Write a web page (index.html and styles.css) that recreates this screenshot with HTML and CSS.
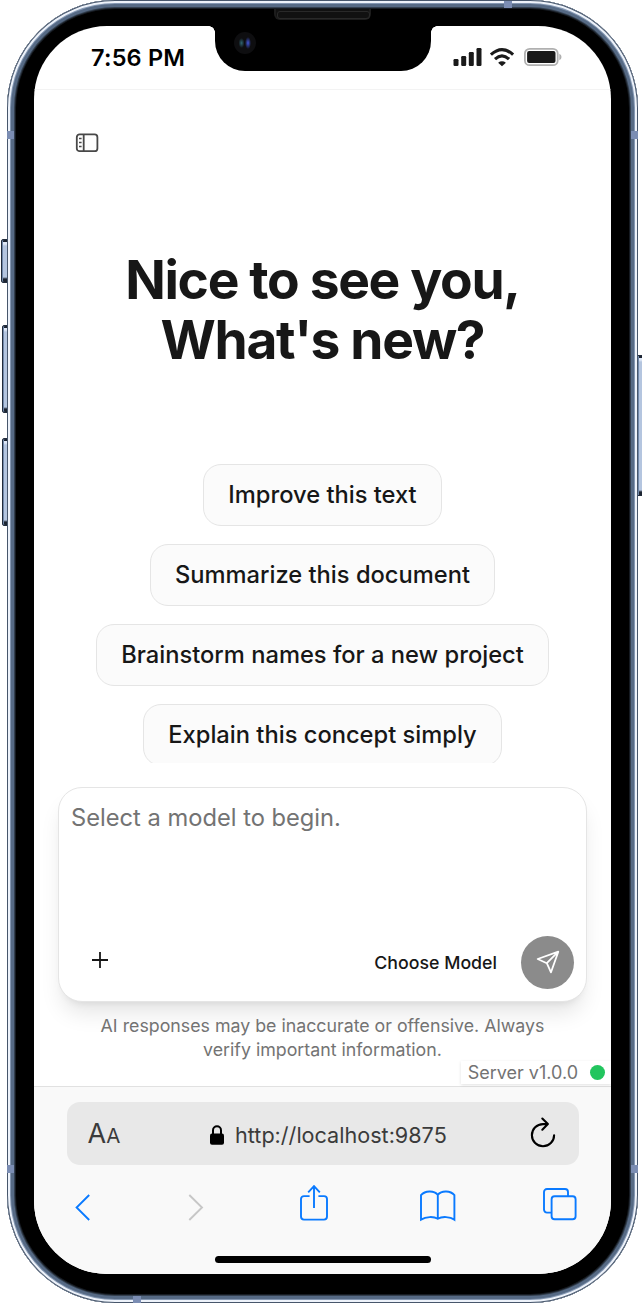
FILE: index.html
```html
<!DOCTYPE html>
<html lang="en">
<head>
<meta charset="utf-8">
<title>Chat</title>
<link rel="stylesheet" href="styles.css">
</head>
<body>
<div class="stage">
  <span class="key key-mute"></span>
  <span class="key key-up"></span>
  <span class="key key-down"></span>
  <span class="key key-power"></span>
  <div class="device">
    <div class="screen">
      <header class="status">
        <span class="time">7:56 PM</span>
        <svg class="signals" width="110" height="22" viewBox="0 0 110 22">
          <g fill="#1a1a1a">
            <rect x="1.500" y="12" width="5" height="7" rx="1.2"/>
            <rect x="9.200" y="9" width="5" height="10" rx="1.2"/>
            <rect x="16.800" y="5" width="5" height="14" rx="1.2"/>
            <rect x="24.500" y="1" width="5" height="18" rx="1.2"/>
            <path d="M50 19.2l-3.9-3.5q3.9-2.9 7.8 0z"/>
          </g>
          <g fill="none" stroke="#1a1a1a" stroke-width="3.1">
            <path d="M38.900 7.7Q50-2.6 61.100 7.7"/>
            <path d="M43 12.1Q50 5.7 57 12.1"/>
          </g>
          <rect x="72.9" y="1.8" width="32.8" height="16.4" rx="4.8" fill="none" stroke="#b0b0b0" stroke-width="1.8"/>
          <rect x="75.1" y="4" width="28.4" height="12" rx="2" fill="#1a1a1a"/>
          <path d="M107.300 6.8q2.2 .8 2.2 3.2t-2.2 3.2z" fill="#b0b0b0"/>
        </svg>
      </header>

      <main class="app">
        <nav class="topbar">
          <svg width="24" height="20" viewBox="0 0 24 20" fill="none" stroke="#484848" stroke-width="1.8">
            <rect x="1.8" y="1.4" width="20.6" height="16.8" rx="2.8"/>
            <path d="M8.7 1.4v16.8"/>
            <path d="M4 5.6h2.6M4 9.6h2.6M4 13.6h2.6" stroke-width="1.5"/>
          </svg>
        </nav>
        <h1 class="greeting">Nice to see you,<br>What's new?</h1>
        <div class="prompts">
          <button class="chip">Improve this text</button>
          <button class="chip">Summarize this document</button>
          <button class="chip">Brainstorm names for a new project</button>
          <button class="chip">Explain this concept simply</button>
        </div>
        <section class="composer">
          <p class="placeholder">Select a model to begin.</p>
          <div class="tools">
            <svg class="plus" width="18" height="18" viewBox="0 0 18 18" stroke="#171717" stroke-width="1.8"><path d="M1 9h16M9 1v16"/></svg>
            <span class="model">Choose Model</span>
            <button class="send" aria-label="Send">
              <svg width="24" height="24" viewBox="0 0 24 24" fill="none" stroke="#fff" stroke-width="1.8" stroke-linejoin="round"><path d="M22.3 1.7L15 22.3 10.8 13.2 1.7 9zM22.3 1.7L10.8 13.2"/></svg>
            </button>
          </div>
        </section>
        <p class="notice">AI responses may be inaccurate or offensive. Always<br>verify important information.</p>
        <div class="server"><span>Server v1.0.0</span><i class="dot"></i></div>
      </main>

      <footer class="browser">
        <div class="address">
          <span class="reader">A<small>A</small></span>
          <span class="url">
            <svg width="14" height="20" viewBox="0 0 14 20"><rect y="8.4" width="14" height="11.4" rx="2" fill="#000"/><path d="M3 9V5.2a4 4 0 0 1 8 0V9" fill="none" stroke="#000" stroke-width="2"/></svg>
            <span>http://localhost:9875</span>
          </span>
          <svg class="reload" width="26" height="31" viewBox="0 0 26 31" fill="none" stroke="#000" stroke-width="2.1" stroke-linecap="round" stroke-linejoin="round"><path d="M17.2 7.1H13A11.1 11.1 0 1 0 24.1 18.2M12.3 1.5l5.6 5.6-5.6 5.6"/></svg>
        </div>
        <div class="actions">
          <svg width="16" height="27" viewBox="0 0 16 27" class="blue"><path d="M14.2 1L1.6 13.5 14.2 26"/></svg>
          <svg width="16" height="27" viewBox="0 0 16 27" class="gray forward"><path d="M1.3 1L14 13.5 1.3 26"/></svg>
          <svg width="28" height="36" viewBox="0 0 28 36" class="blue share"><path d="M9.6 11.1H4a3 3 0 0 0-3 3V31.6a3 3 0 0 0 3 3h20a3 3 0 0 0 3-3V14.1a3 3 0 0 0-3-3h-5.6M14 23V1.6M8.2 7.4L14 1.2l5.8 6.2"/></svg>
          <svg width="36" height="31" viewBox="0 0 36 31" class="blue book"><path d="M17.800 4.800v23.600M1 29.600V5.200C5 .6 14 .2 17.800 4.800 21.600 .2 30.600 .6 34.400 5.200V29.600C30 26.600 22 26.200 17.800 28.800 13.500 26.200 6 26.600 1 29.600z"/></svg>
          <svg width="34" height="33" viewBox="0 0 34 33" class="blue tabs"><path d="M8.6 24.6H4a3 3 0 0 1-3-3V4a3 3 0 0 1 3-3h18a3 3 0 0 1 3 3v4.2"/><rect x="8.6" y="8.2" width="24" height="23" rx="3"/></svg>
        </div>
        <div class="home"></div>
      </footer>
    </div>
    <div class="notch"><span class="speaker"></span><span class="camera"></span></div>
    <i class="band band-tr"></i><i class="band band-bl"></i>
    <i class="band side l t"></i><i class="band side r t"></i><i class="band side l b"></i><i class="band side r b"></i>
  </div>
</div>
</body>
</html>
```

FILE: styles.css
```css
* { box-sizing: border-box; margin: 0; padding: 0; }
body { background: #fff; font-family: Inter, sans-serif; color: #171717; overflow: hidden; }
svg { display: block; flex: none; }
button { font: inherit; color: inherit; border: 0; }

.stage { position: relative; width: 642px; height: 1303px; padding-left: 7px; }
.device {
  position: relative;
  width: 631px;
  height: 1303px;
  padding: 26px 27px 29px;
  border-radius: 108px;
  background: #000;
  box-shadow:
    inset 0 0 0 1px #47566b,
    inset 0 0 0 3px #edf2fa,
    inset 0 0 0 4px #8497b2,
    inset 0 0 0 7px #566a85,
    inset 0 0 0 8px #34404f,
    inset 0 0 0 9px #161b22;
}
.key {
  position: absolute;
  border: 1px solid #222c3c;
  background: linear-gradient(#1c2431 0 2px, #dfe8f7 2px 4px, #b4c5df 6px calc(100% - 5px), #1c2431 calc(100% - 3px));
  box-shadow: inset 1px 0 #7088aa;
}
.key-mute { left: 1px; top: 239px; width: 8px; height: 44px; border-radius: 2px 0 0 2px; }
.key-up { left: 2px; top: 325px; width: 7px; height: 88px; border-radius: 2px 0 0 2px; }
.key-down { left: 2px; top: 438px; width: 7px; height: 88px; border-radius: 2px 0 0 2px; }
.key-power { left: 637px; top: 355px; width: 8px; height: 141px; }

.band { position: absolute; background: #7b8db3; }
.band-tr { left: 497px; top: 1px; width: 8px; height: 7px; }
.band-bl { left: 126px; bottom: 0; width: 8px; height: 7px; }
.side { width: 7px; height: 8px; }
.l { left: 0; } .r { right: 0; } .t { top: 131px; } .b { top: 1165px; }

.screen {
  display: flex;
  flex-direction: column;
  height: 1248px;
  border-radius: 73px;
  overflow: hidden;
  background: #fff;
}
.notch {
  position: absolute;
  left: 208px;
  top: 9px;
  width: 216px;
  height: 62px;
  background: #000;
  border-radius: 0 0 30px 30px;
}
.notch::before, .notch::after {
  content: "";
  position: absolute;
  top: 17px;
  width: 6px;
  height: 6px;
}
.notch::before { left: -6px; background: radial-gradient(circle at 0 100%, transparent 5.5px, #000 6px); }
.notch::after { right: -6px; background: radial-gradient(circle at 100% 100%, transparent 5.5px, #000 6px); }
.speaker {
  position: absolute;
  left: 59px;
  top: 0;
  width: 97px;
  height: 11px;
  border: 2px solid #1c1c1c;
  border-top: 0;
  border-radius: 0 0 6px 6px;
  background: #111;
}
.speaker::before {
  content: "";
  position: absolute;
  left: 1px;
  top: 2px;
  width: 91px;
  height: 6px;
  border: 1px solid #292929;
  border-radius: 3px;
}
.camera {
  position: absolute;
  left: 19px;
  top: 23px;
  width: 22px;
  height: 22px;
  border-radius: 50%;
  background:
    radial-gradient(ellipse 3px 5px at 7.5px 11px, #2f6470, transparent),
    radial-gradient(ellipse 3px 6px at 14px 11px, #4257d8, transparent),
    #0e0e10;
}

.status {
  display: flex;
  justify-content: space-between;
  flex: none;
  height: 64px;
  padding: 19px 49px 0 57px;
  border-bottom: 1px solid #f3f3f3;
}
.time { font-size: 23.5px; line-height: 26px; font-weight: 600; color: #000; letter-spacing: 0.2px; }
.signals { margin-top: 2px; }

.app { display: flex; flex-direction: column; align-items: center; height: 996px; flex: none; }
.topbar { align-self: stretch; padding: 43px 0 0 41px; height: 160px; }
.greeting { font-size: 53.3px; line-height: 60px; font-weight: 700; letter-spacing: -1.33px; text-align: center; }
.prompts {
  display: flex;
  flex-direction: column;
  align-items: center;
  gap: 18px;
  height: 300px;
  margin-top: 93px;
  padding-top: 1px;
  overflow: hidden;
}
.chip {
  flex: none;
  height: 62px;
  padding: 0 24px;
  border: 1.5px solid #e5e5e5;
  border-radius: 18px;
  background: #fbfbfb;
  font-size: 23.7px;
  font-weight: 500;
  line-height: 60px;
  white-space: nowrap;
}
.composer {
  display: flex;
  flex-direction: column;
  justify-content: space-between;
  flex: none;
  width: 529px;
  height: 215px;
  margin-top: 24px;
  padding: 15px 12px 12px;
  border: 1.5px solid #e5e5e5;
  border-radius: 24px;
  background: #fff;
  box-shadow: 0 15px 22px -4px rgba(0,0,0,.1), 0 6px 9px -6px rgba(0,0,0,.1);
}
.placeholder { font-size: 23.7px; line-height: 30px; color: #737373; }
.tools { display: flex; align-items: center; height: 54px; }
.plus { margin: -5px 0 0 20px; }
.model { margin-left: auto; margin-right: 24px; font-size: 17.75px; font-weight: 500; }
.send { display: grid; place-items: center; width: 53px; height: 53px; border-radius: 50%; background: #8b8b8b; }
.notice { margin-top: 12px; font-size: 17.77px; line-height: 24px; color: #737373; text-align: center; white-space: nowrap; }
.server {
  display: flex;
  align-items: center;
  gap: 12px;
  align-self: flex-end;
  position: relative;
  height: 23px;
  margin-top: -1px;
  padding: 0 6px 0 7px;
  background: #fff;
  font-size: 18px;
  color: #737373;
  white-space: nowrap;
  box-shadow: 0 1px 3px rgba(0,0,0,.12);
}
.dot { width: 15px; height: 15px; border-radius: 50%; background: #22c55e; }

.browser {
  display: flex;
  flex-direction: column;
  align-items: center;
  flex: 1;
  border-top: 1.5px solid #e1e1e1;
  background: #f9f9f9;
}
.address {
  display: flex;
  justify-content: space-between;
  align-items: center;
  flex: none;
  width: 512px;
  height: 63px;
  margin-top: 15px;
  padding: 2px 22px 0 21px;
  border-radius: 13px;
  background: #e8e8e8;
  color: #3b3b3b;
}
.reader { font-size: 27px; line-height: 34px; }
.reader small { font-size: 20.5px; }
.url { display: flex; align-items: center; gap: 11px; margin-left: 6px; font-size: 21.6px; }
.reload { margin-top: -5px; }
.actions {
  display: flex;
  align-items: center;
  align-self: stretch;
  height: 40px;
  margin-top: 22px;
  padding-left: 41px;
}
.actions svg { fill: none; stroke-width: 1.9; overflow: visible; }
.actions .forward { margin-left: 97px; }
.actions .share { margin: -8px 0 0 96px; }
.actions .book { margin: -3px 0 0 92px; }
.actions .tabs { margin: -5px 0 0 87px; }
.blue { stroke: #0a7aff; }
.gray { stroke: #c7c7c7; }
.home { flex: none; width: 216px; height: 7px; margin-top: 29px; border-radius: 4px; background: #000; }
```
